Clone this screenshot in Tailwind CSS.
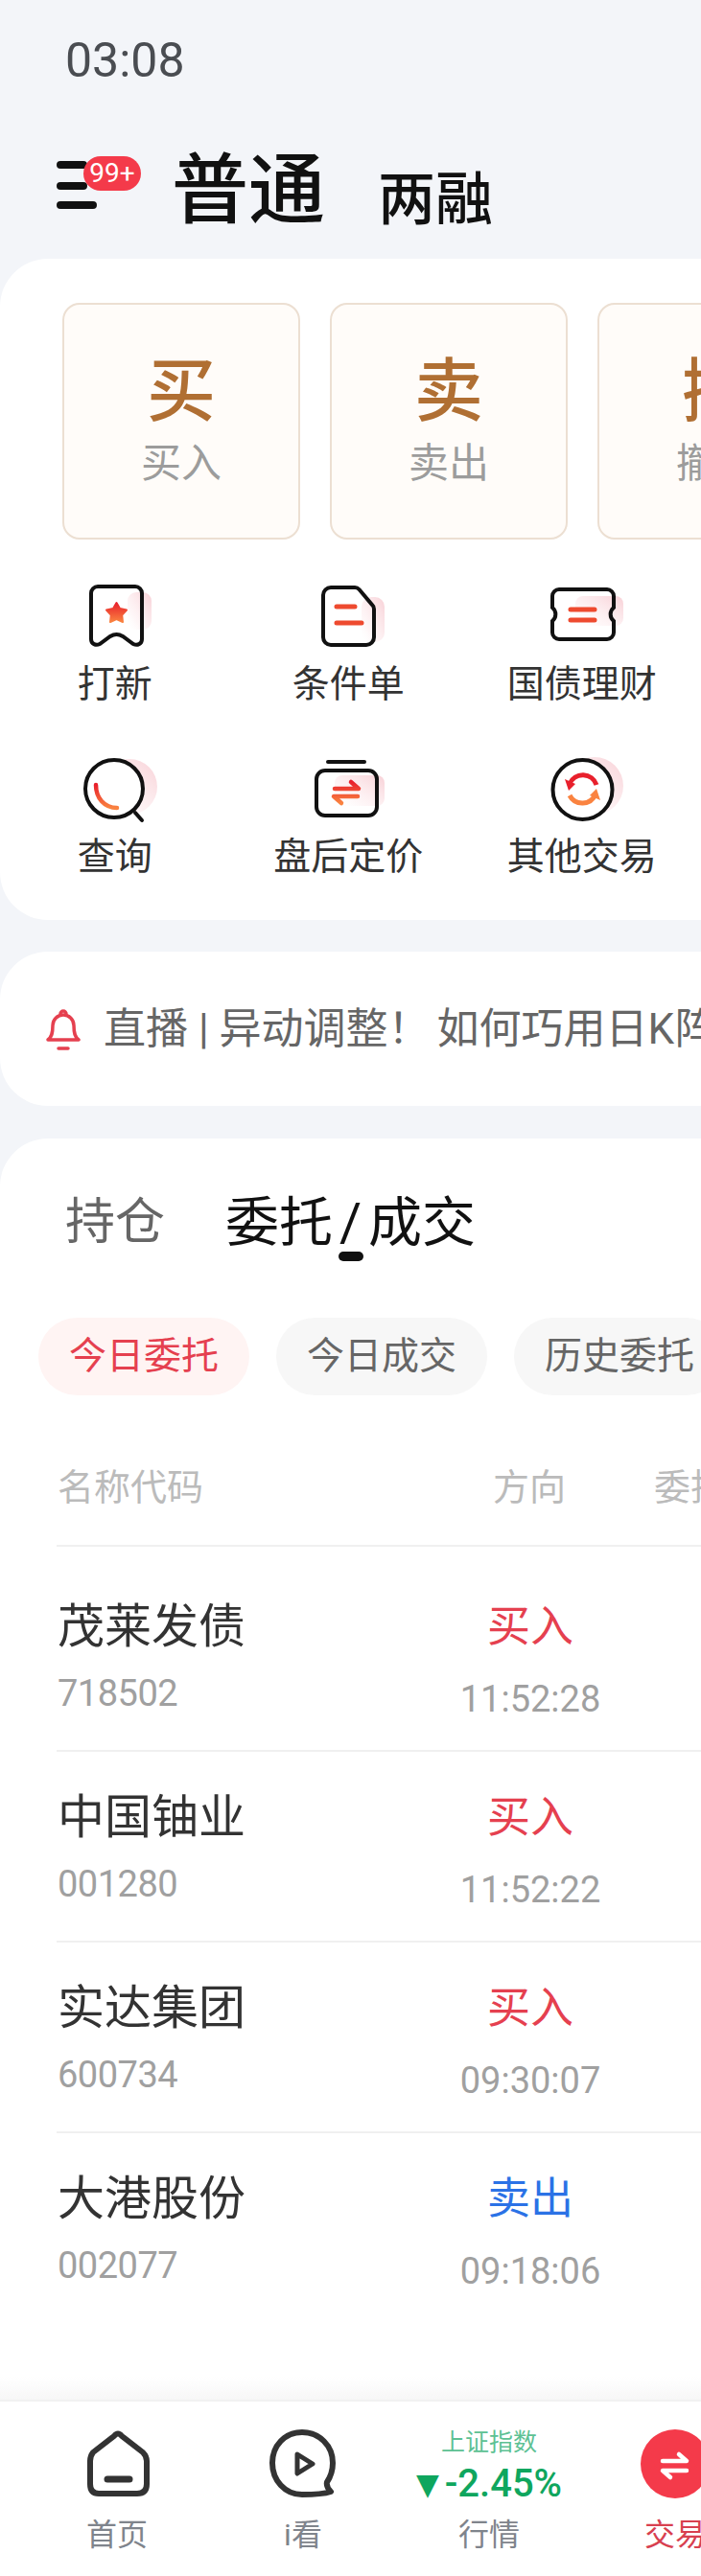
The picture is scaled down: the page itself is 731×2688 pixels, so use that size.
<!DOCTYPE html>
<html>
<head>
  <meta charset="utf-8" />
  <meta name="viewport" content="width=device-width, initial-scale=1.0" />
  <title>交易</title>
  <script src="https://cdn.jsdelivr.net/npm/@tailwindcss/browser@4"></script>
</head>
<body class="w-[731px] h-[2688px] overflow-hidden flex flex-col bg-[#f3f5f9] text-[#333] font-['Roboto','Noto_Sans_CJK_SC',sans-serif]">

  <!-- shared gradients -->
  <svg width="0" height="0" class="absolute">
    <defs>
      <linearGradient id="hot" x1="0" y1="0" x2="0" y2="1">
        <stop offset="0" stop-color="#e8202c" />
        <stop offset="1" stop-color="#fa8340" />
      </linearGradient>
      <linearGradient id="pink" x1="1" y1="0" x2="0" y2="1">
        <stop offset="0" stop-color="#f8d0d6" />
        <stop offset="0.7" stop-color="#fdeef0" stop-opacity="0.5" />
        <stop offset="1" stop-color="#ffffff" stop-opacity="0" />
      </linearGradient>
    </defs>
  </svg>

  <!-- status bar -->
  <div class="h-[150px] shrink-0 pl-[68px] pt-[36px]">
    <div class="text-[50px] leading-[54px] text-[#4a4d52]">03:08</div>
  </div>

  <!-- account switcher -->
  <div class="h-[120px] shrink-0 flex items-start pl-[59px] text-[#111]">
    <div class="relative w-[120px] h-[90px]">
      <svg width="44" height="60" class="mt-[16px]" fill="none" stroke="#111" stroke-width="8" stroke-linecap="round">
        <path d="M4 6H28M4 28H28M4 48H38" />
      </svg>
      <span class="absolute left-[28px] top-[13px] w-[60px] h-[36px] rounded-full bg-[#f43a4a] text-white text-[28px] leading-[35px] text-center">99+</span>
    </div>
    <div class="text-[80px] leading-[90px] font-medium w-[215px] mt-[4px]">普通</div>
    <div class="text-[60px] leading-[70px] font-medium mt-[24px]">两融</div>
  </div>

  <!-- trade card -->
  <section class="h-[690px] shrink-0 bg-white rounded-l-[50px] pt-[46px] overflow-hidden">
    <div class="flex gap-[31px] pl-[65px]">
      <div class="w-[248px] h-[247px] shrink-0 rounded-[18px] border-2 border-[#ecdfd2] bg-[#fffcf9] pt-[51px] text-center">
        <div class="text-[72px] leading-[80px] font-medium text-[#b06f33]">买</div>
        <div class="text-[42px] leading-[50px] mt-[10px] text-[#9c9c9c]">买入</div>
      </div>
      <div class="w-[248px] h-[247px] shrink-0 rounded-[18px] border-2 border-[#ecdfd2] bg-[#fffcf9] pt-[51px] text-center">
        <div class="text-[72px] leading-[80px] font-medium text-[#b06f33]">卖</div>
        <div class="text-[42px] leading-[50px] mt-[10px] text-[#9c9c9c]">卖出</div>
      </div>
      <div class="w-[248px] h-[247px] shrink-0 rounded-[18px] border-2 border-[#ecdfd2] bg-[#fffcf9] pt-[51px] text-center">
        <div class="text-[72px] leading-[80px] font-medium text-[#b06f33]">撤</div>
        <div class="text-[42px] leading-[50px] mt-[10px] text-[#9c9c9c]">撤单</div>
      </div>
    </div>

    <div class="grid grid-cols-[243.5px_243.5px_243.5px] gap-y-[48px] mt-[44px] ml-[-2px] text-center text-[39px] leading-[50px]">
      <div>
        <svg width="90" height="72" class="mx-auto mb-[10px]" fill="none">
          <rect x="58" y="11" width="25" height="39" rx="9" fill="url(#pink)" />
          <path d="M27 5H66a7 7 0 0 1 7 7V60c0 5-5 7-9 5L53 57Q46.500 53 40 57L29 65c-4 2-9 0-9-5V12a7 7 0 0 1 7-7z" stroke="#111" stroke-width="4" fill="none" />
          <path d="M46.500 22L50 28.100 57 29.600 52.200 34.900 53 42 46.500 39 40 42 40.800 34.900 36 29.600 43 28.100z" fill="url(#hot)" stroke="url(#hot)" stroke-width="2" stroke-linejoin="round" />
        </svg>
        <div>打新</div>
      </div>
      <div>
        <svg width="90" height="72" class="mx-auto mb-[10px]" fill="none">
          <rect x="59" y="16" width="24" height="47" rx="10" fill="url(#pink)" />
          <path d="M27 6H52a6 6 0 0 1 4.500 2L70 24a6 6 0 0 1 2 4.500V58a8 8 0 0 1-8 8H27a8 8 0 0 1-8-8V14a8 8 0 0 1 8-8z" stroke="#111" stroke-width="4" />
          <path d="M33 26H52M33 43H59" stroke="#ee4a2f" stroke-width="5" stroke-linecap="round" />
        </svg>
        <div>条件单</div>
      </div>
      <div>
        <svg width="90" height="72" class="mx-auto mb-[10px]" fill="none">
          <rect x="38" y="15" width="50" height="31" rx="8" fill="url(#pink)" />
          <path d="M21 8H71a7 7 0 0 1 7 7V27a9 9 0 0 0 0 14V53a7 7 0 0 1-7 7H21a7 7 0 0 1-7-7V41a9 9 0 0 0 0-14V15a7 7 0 0 1 7-7z" stroke="#111" stroke-width="4" />
          <path d="M33 29H58M33 40H58" stroke="#ee4a2f" stroke-width="5" stroke-linecap="round" />
        </svg>
        <div>国债理财</div>
      </div>
      <div>
        <svg width="90" height="72" class="mx-auto mb-[10px]" fill="none">
          <circle cx="60" cy="34" r="29" fill="url(#pink)" />
          <circle cx="44" cy="36" r="30" stroke="#111" stroke-width="4" fill="#fff" />
          <path d="M66 61L73 69" stroke="#111" stroke-width="4" stroke-linecap="round" />
          <path d="M25 32C25 46 34 56 47 56" stroke="url(#hot)" stroke-width="4.500" stroke-linecap="round" />
        </svg>
        <div>查询</div>
      </div>
      <div>
        <svg width="90" height="72" class="mx-auto mb-[10px]" fill="none">
          <rect x="31" y="22" width="52" height="32" rx="8" fill="url(#pink)" />
          <path d="M24 8H62" stroke="#111" stroke-width="4" stroke-linecap="round" />
          <rect x="12" y="17" width="63" height="47" rx="9" stroke="#111" stroke-width="4" />
          <path d="M48 29L56 36H31M38 51L30 44H55" stroke="url(#hot)" stroke-width="4.500" stroke-linecap="round" stroke-linejoin="round" />
        </svg>
        <div>盘后定价</div>
      </div>
      <div>
        <svg width="90" height="72" class="mx-auto mb-[10px]" fill="none">
          <circle cx="58" cy="33" r="30" fill="url(#pink)" />
          <circle cx="45.500" cy="37" r="31" stroke="#111" stroke-width="4" fill="#fff" />
          <path d="M32 31A15 15 0 0 1 60 32" stroke="#e8202c" stroke-width="5" />
          <path d="M27 26L38 31 31 38z" fill="#e8202c" />
          <path d="M32 43A15 15 0 0 0 59 42" stroke="#fa8340" stroke-width="5" />
          <path d="M64 48L53 43 60 36z" fill="#fa8340" />
        </svg>
        <div>其他交易</div>
      </div>
    </div>
  </section>

  <!-- notice -->
  <section class="h-[161px] shrink-0 mt-[33px] bg-white rounded-l-[50px] flex items-center pl-[48px] overflow-hidden">
    <svg width="36" height="44" class="shrink-0" fill="none" stroke="#e5404f" stroke-width="3.500" stroke-linecap="round" stroke-linejoin="round">
      <path d="M2 33C6 30 7 26 7 18A11 11 0 0 1 29 18C29 26 30 30 34 33Z" />
      <path d="M15 6A3 3 0 0 1 21 6" />
      <path d="M13 42H23" />
    </svg>
    <div class="ml-[24px] text-[44px] leading-[60px] text-[#666] whitespace-nowrap">直播 | 异动调整！<span class="ml-[7px]">如何巧用日K阵</span></div>
  </section>

  <!-- orders -->
  <section class="relative flex-1 min-h-0 mt-[34px] bg-white rounded-tl-[50px] pt-[58px] overflow-hidden">
    <div class="relative flex items-center pl-[68px] h-[60px] whitespace-nowrap">
      <span class="text-[52px] leading-[60px] text-[#666] w-[167px]">持仓</span>
      <span class="text-[56px] leading-[60px] text-[#111]">委托<span class="mx-[7px]">/</span>成交</span>
      <span class="absolute left-[353px] top-[60px] w-[26px] h-[10px] rounded-full bg-[#111]"></span>
    </div>

    <div class="flex gap-[28px] pl-[40px] mt-[69px] text-[39px] whitespace-nowrap">
      <div class="w-[220px] h-[81px] shrink-0 rounded-full bg-[#fff4f3] text-[#e5404f] leading-[81px] text-center">今日委托</div>
      <div class="w-[220px] h-[81px] shrink-0 rounded-full bg-[#f7f7f7] text-[#666] leading-[81px] text-center">今日成交</div>
      <div class="w-[220px] h-[81px] shrink-0 rounded-full bg-[#f7f7f7] text-[#666] leading-[81px] text-center">历史委托</div>
    </div>

    <div class="ml-[59px]">
      <div class="flex mt-[71px] pb-[35px] border-b-2 border-[#f0f0f0] text-[38px] leading-[50px] text-[#bbb] whitespace-nowrap">
        <div class="w-[455px] shrink-0 pl-[1px]">名称代码</div>
        <div class="w-[168px] shrink-0">方向</div>
        <div class="shrink-0">委托</div>
      </div>

      <div class="flex h-[214px] pt-[54px] border-b-2 border-[#f0f0f0]">
        <div class="w-[394px] shrink-0 pl-[1px]">
          <div class="text-[49px] leading-[60px]">茂莱发债</div>
          <div class="text-[38px] leading-[44px] mt-[17px] text-[#a0a0a0] tracking-[-0.5px]">718502</div>
        </div>
        <div class="w-[200px] shrink-0 text-center">
          <div class="text-[45px] leading-[60px] text-[#e5404f]">买入</div>
          <div class="text-[38px] leading-[44px] mt-[23px] text-[#a0a0a0]">11:52:28</div>
        </div>
      </div>
      <div class="flex h-[199px] pt-[39px] border-b-2 border-[#f0f0f0]">
        <div class="w-[394px] shrink-0 pl-[1px]">
          <div class="text-[49px] leading-[60px]">中国铀业</div>
          <div class="text-[38px] leading-[44px] mt-[17px] text-[#a0a0a0] tracking-[-0.5px]">001280</div>
        </div>
        <div class="w-[200px] shrink-0 text-center">
          <div class="text-[45px] leading-[60px] text-[#e5404f]">买入</div>
          <div class="text-[38px] leading-[44px] mt-[23px] text-[#a0a0a0]">11:52:22</div>
        </div>
      </div>
      <div class="flex h-[199px] pt-[39px] border-b-2 border-[#f0f0f0]">
        <div class="w-[394px] shrink-0 pl-[1px]">
          <div class="text-[49px] leading-[60px]">实达集团</div>
          <div class="text-[38px] leading-[44px] mt-[17px] text-[#a0a0a0] tracking-[-0.5px]">600734</div>
        </div>
        <div class="w-[200px] shrink-0 text-center">
          <div class="text-[45px] leading-[60px] text-[#e5404f]">买入</div>
          <div class="text-[38px] leading-[44px] mt-[23px] text-[#a0a0a0]">09:30:07</div>
        </div>
      </div>
      <div class="flex h-[199px] pt-[39px]">
        <div class="w-[394px] shrink-0 pl-[1px]">
          <div class="text-[49px] leading-[60px]">大港股份</div>
          <div class="text-[38px] leading-[44px] mt-[17px] text-[#a0a0a0] tracking-[-0.5px]">002077</div>
        </div>
        <div class="w-[200px] shrink-0 text-center">
          <div class="text-[45px] leading-[60px] text-[#2b72e6]">卖出</div>
          <div class="text-[38px] leading-[44px] mt-[23px] text-[#a0a0a0]">09:18:06</div>
        </div>
      </div>
    </div>
    <div class="absolute left-0 right-0 bottom-0 h-[24px] bg-gradient-to-b from-white to-[#f7f7f7]"></div>
  </section>

  <!-- bottom nav -->
  <nav class="h-[184px] shrink-0 bg-white border-t-2 border-[#f1f1f1] flex pl-[25px] pt-[24px] overflow-hidden text-center text-[32px] leading-[40px] text-[#7f848c]">
    <div class="w-[194px] shrink-0">
      <svg width="80" height="82" class="mx-auto mb-[13px]" fill="none" stroke="#333" stroke-width="6" stroke-linejoin="round">
        <path d="M37 12Q41 7 45 12L67 29Q71 33 71 38V62Q71 72 61 72H21Q12 72 12 62V38Q12 33 15 29Z" />
        <path d="M30 57H53" stroke-width="7" stroke-linecap="round" />
      </svg>
      <div>首页</div>
    </div>
    <div class="w-[194px] shrink-0">
      <svg width="80" height="82" class="mx-auto mb-[13px]" fill="none" stroke="#333" stroke-width="6" stroke-linejoin="round">
        <path d="M39 73C21 73 8 58 8 40C8 22 21 8 39 8C57 8 71 22 71 40C71 48 69 54 65 60C64 64 66 67 69 70C63 72 52 73 39 73Z" />
        <path d="M34 31L50 41L34 51Z" stroke-width="5" />
      </svg>
      <div>i看</div>
    </div>
    <div class="w-[194px] shrink-0">
      <div class="h-[82px] mb-[13px] pt-[4px] whitespace-nowrap">
        <div class="text-[25px] leading-[30px] text-[#5cc193]">上证指数</div>
        <div class="text-[40px] leading-[40px] mt-[8px] font-medium text-[#0fa65e]"><span class="font-['DejaVu_Sans'] text-[31px] align-[2px] mr-[-4px]">▼</span> -2.45%</div>
      </div>
      <div>行情</div>
    </div>
    <div class="w-[194px] shrink-0 text-[#d8404f]">
      <svg width="80" height="82" class="mx-auto mb-[13px]" fill="none" stroke="#fff" stroke-width="4.500" stroke-linecap="round" stroke-linejoin="round">
        <circle cx="40" cy="41" r="36" fill="#f43a4a" stroke="none" />
        <path d="M44 31L52 38H27M35 55L27 48H52" />
      </svg>
      <div>交易</div>
    </div>
  </nav>

</body>
</html>
